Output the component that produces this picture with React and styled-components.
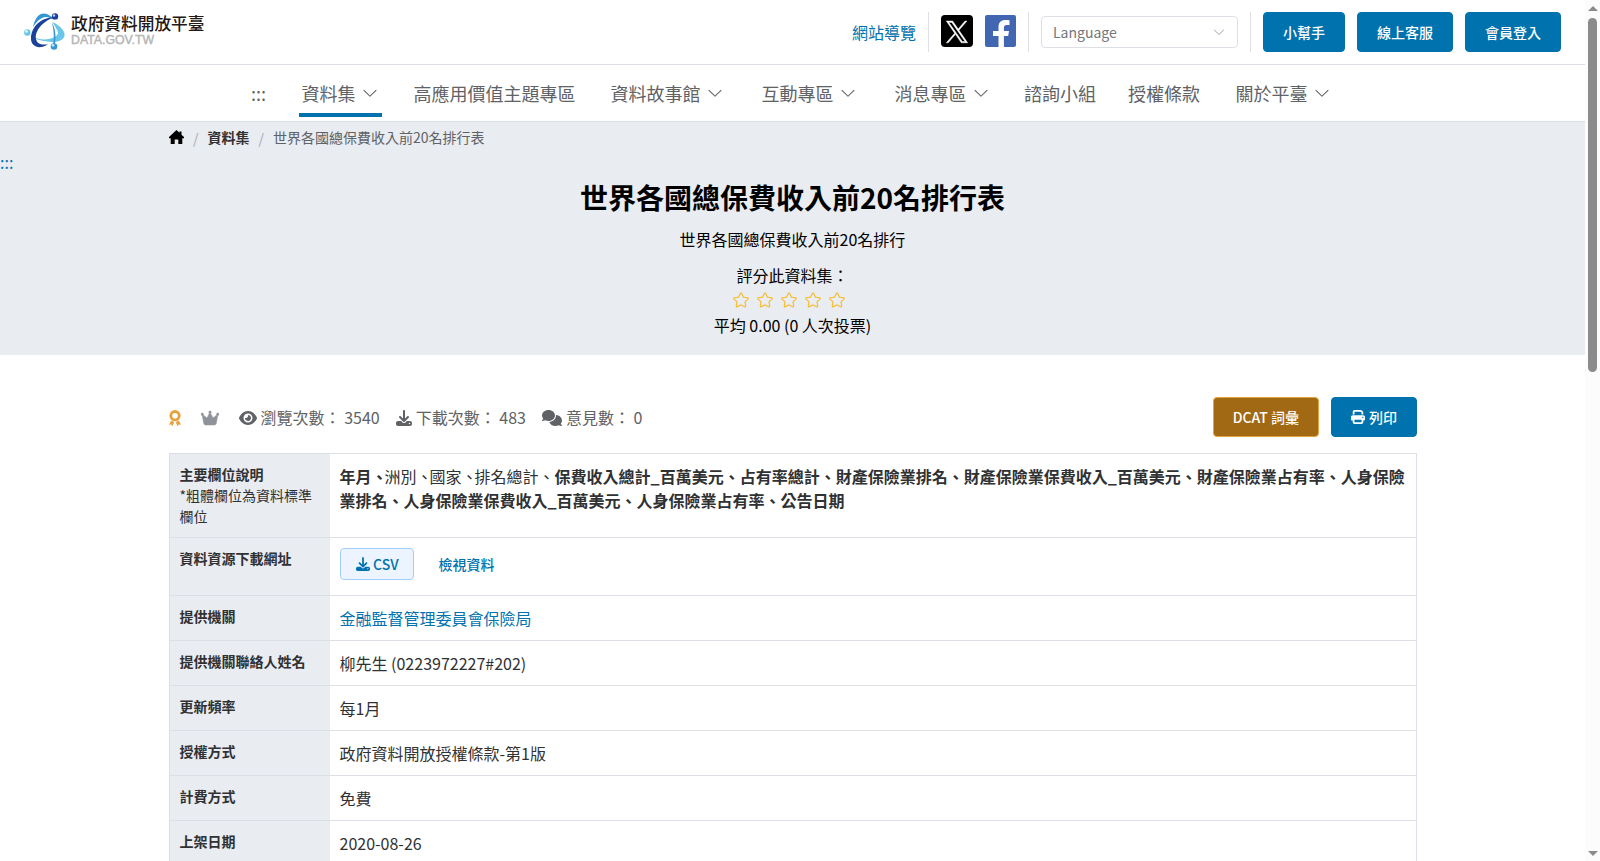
import React from 'react';
import styled, { createGlobalStyle } from 'styled-components';
import { FaEye, FaDownload, FaComments, FaPrint, FaCrown } from 'react-icons/fa6';

const navItems = [
  { label: '資料集', arrow: true, active: true, width: 83, left: 2.5, gap: 30 },
  { label: '高應用價值主題專區', width: 164, left: 1.5, gap: 32 },
  { label: '資料故事館', arrow: true, width: 119, left: 2.5, gap: 32 },
  { label: '互動專區', arrow: true, width: 101, left: 2.5, gap: 32 },
  { label: '消息專區', arrow: true, width: 101, left: 2.5, gap: 31 },
  { label: '諮詢小組', width: 72, left: 0, gap: 32 },
  { label: '授權條款', width: 72, left: 0, gap: 33 },
  { label: '關於平臺', arrow: true, width: 101, left: 2.5, gap: 0 },
];

const rows = [
  { title: '提供機關', value: '金融監督管理委員會保險局', link: true },
  { title: '提供機關聯絡人姓名', value: '柳先生 (0223972227#202)' },
  { title: '更新頻率', value: '每1月' },
  { title: '授權方式', value: '政府資料開放授權條款-第1版' },
  { title: '計費方式', value: '免費' },
  { title: '上架日期', value: '2020-08-26' },
];

const ArrowDown = ({ size }) => (
  <svg width={size} height={size} viewBox="0 0 1024 1024" fill="currentColor">
    <path d="M831.872 340.864 512 652.672 192.128 340.864a30.592 30.592 0 0 0-42.752 0 29.12 29.12 0 0 0 0 41.6L489.664 714.24a32 32 0 0 0 44.672 0l340.288-331.712a29.12 29.12 0 0 0 0-41.728 30.592 30.592 0 0 0-42.752 0z" />
  </svg>
);

const Star = () => (
  <svg width="18" height="18" viewBox="0 0 1024 1024" fill="currentColor">
    <path d="m512 747.84 228.16 119.936a6.4 6.4 0 0 0 9.28-6.72l-43.52-254.08 184.512-179.904a6.4 6.4 0 0 0-3.52-10.88l-255.104-37.12L517.76 147.904a6.4 6.4 0 0 0-11.52 0L392.192 379.072l-255.104 37.12a6.4 6.4 0 0 0-3.52 10.88L318.08 606.976l-43.584 254.08a6.4 6.4 0 0 0 9.28 6.72L512 747.84zM313.6 924.48a70.4 70.4 0 0 1-102.144-74.24l37.888-220.928L88.96 472.96A70.4 70.4 0 0 1 128 352.896l221.76-32.256 99.2-200.96a70.4 70.4 0 0 1 126.208 0l99.2 200.96 221.824 32.256a70.4 70.4 0 0 1 39.04 120.064L774.72 629.376l37.888 220.928a70.4 70.4 0 0 1-102.144 74.24L512 820.096l-198.4 104.32z" />
  </svg>
);

const LogoMark = () => (
  <svg width="42" height="38" viewBox="0 0 42 38">
    <path d="M9 14C11 5 15 .6 20 .6c4 0 7 2.400 9.500 6-4-2.600-8-3.200-11-1.800-4 1.400-6 4.700-9.500 9.200z" fill="#3497d5" />
    <path d="M3 20c7 6 15 7.500 23 5.700 7-1.700 9.600-4.700 7-9l-4.600-8c9 5 13.300 10 12 14.500-2 5.300-9.400 6.600-17.400 5.400C15 27.500 8 25 3 20z" fill="#6ac6e8" />
    <path d="M28 9.500c3.600 6.500 4.300 14 2.800 22.500l-1.600-.5c1.200-7.500.6-14.500-1.200-22z" fill="#3497d5" />
    <path d="M30 4.500C17 4 7 14 7 25.500c0 8.500 9 11.500 17 5.500-6 1.600-11 0-12-5-1.500-8 7-18 18-21.500z" fill="#1b4298" />
    <circle cx="31" cy="3.400" r="3.200" fill="#1b4298" />
    <circle cx="3.300" cy="19.500" r="3.200" fill="#6ac6e8" />
    <circle cx="30" cy="33.500" r="3.300" fill="#3497d5" />
    <circle cx="30" cy="2.500" r="1.200" fill="#b9d5ee" />
    <circle cx="2.400" cy="18.400" r="1.400" fill="#e4f6fb" />
    <circle cx="29" cy="32.300" r="1.400" fill="#c4e3f5" />
  </svg>
);

const XLogo = () => (
  <svg width="32" height="32" viewBox="0 0 32 32">
    <rect width="32" height="32" rx="4" fill="#000" />
    <g transform="translate(5.3 6) scale(.0178)">
      <path fill="#fff" stroke="#fff" strokeWidth="26" d="M714.163 519.284 1160.89 0h-105.86L667.137 450.887 357.328 0H0l468.492 681.821L0 1226.37h105.866l409.625-476.152 327.181 476.152H1200L714.137 519.284zM569.165 687.828l-47.468-67.894L144.011 79.694h162.604l304.797 435.991 47.468 67.894 396.2 566.721H892.476L569.165 687.854z" />
    </g>
  </svg>
);

const FacebookLogo = () => (
  <svg width="31" height="32" viewBox="0 0 31 32">
    <rect width="31" height="32" rx="2" fill="#4267b2" />
    <path d="M13.500 32V21H8v-5h5.500v-4c0-4.500 2.500-7 7-7 1.500 0 2.800.1 4 .3V10h-2.600c-2.300 0-3 1.300-3 3v3H24l-.8 5h-4.300v11z" fill="#fff" />
  </svg>
);

const HomeIcon = () => (
  <svg width="15" height="16" viewBox="0 0 15 16">
    <path d="M7.500 1 0 8v1.200h1.700V15h4V10.500h3.600V15h4V9.200H15V8l-2.500-2.300V2.500h-2v1.300z" fill="#000" />
  </svg>
);

const MedalIcon = () => (
  <svg width="12" height="16" viewBox="0 0 12 16" fill="currentColor">
    <circle cx="6" cy="5.700" r="4.200" fill="none" stroke="currentColor" strokeWidth="2.800" />
    <path d="M2 10.800 0 14.800l2.200-.2L3.500 16.200l1.800-4.200zM10 10.800l2 4-2.200-.2-1.300 1.600L6.700 12z" />
  </svg>
);

const App = () => {
  return (
    <Window>
      <GlobalStyle />
      <Page>
        <TopBar>
          <Brand>
            <LogoMark />
            <BrandText>
              <BrandName>政府資料開放平臺</BrandName>
              <BrandDomain>DATA.GOV.TW</BrandDomain>
            </BrandText>
          </Brand>
          <TopTools>
            <SiteMap>網站導覽</SiteMap>
            <Divider />
            <XLogo />
            <FacebookLogo />
            <Divider />
            <Select>
              Language
              <ArrowDown size={14} />
            </Select>
            <Divider />
            <Button>小幫手</Button>
            <Button>線上客服</Button>
            <Button>會員登入</Button>
          </TopTools>
        </TopBar>
        <Nav>
          <Anchor>:::</Anchor>
          {navItems.map((item) => (
            <NavItem key={item.label} $active={item.active} $width={item.width} $left={item.left} $gap={item.gap}>
              {item.label}
              {item.arrow && <ArrowDown size={18} />}
            </NavItem>
          ))}
        </Nav>
        <Hero>
          <Breadcrumb>
            <HomeIcon />
            <Slash>/</Slash>
            <strong>資料集</strong>
            <Slash>/</Slash>
            <span>世界各國總保費收入前20名排行表</span>
          </Breadcrumb>
          <MainAnchor>:::</MainAnchor>
          <Title>世界各國總保費收入前20名排行表</Title>
          <Summary>世界各國總保費收入前20名排行</Summary>
          <RateText>評分此資料集：</RateText>
          <Stars>
            {[1, 2, 3, 4, 5].map((n) => (
              <Star key={n} />
            ))}
          </Stars>
          <RateText>平均 0.00 (0 人次投票)</RateText>
        </Hero>
        <Content>
          <InfoBar>
            <Medal><MedalIcon /></Medal>
            <Crown><FaCrown size={18} /></Crown>
            <Stat><FaEye size={18} />瀏覽次數： 3540</Stat>
            <Stat><FaDownload size={16} />下載次數： 483</Stat>
            <Stat><FaComments size={20} />意見數： 0</Stat>
            <Actions>
              <Button $brown>DCAT 詞彙</Button>
              <Button><FaPrint size={14} />列印</Button>
            </Actions>
          </InfoBar>
          <Table>
            <Row>
              <Label>
                主要欄位說明
                <Note>*粗體欄位為資料標準欄位</Note>
              </Label>
              <Value>
                <b>年月<Comma>、</Comma></b>洲別<Comma>、</Comma>國家<Comma>、</Comma>排名總計、
                <b>保費收入總計_百萬美元、占有率總計、財產保險業排名、財產保險業保費收入_百萬美元、財產保險業占有率、人身保險業排名、人身保險業保費收入_百萬美元、人身保險業占有率、公告日期</b>
              </Value>
            </Row>
            <Row>
              <Label>資料資源下載網址</Label>
              <Resources>
                <CsvButton><FaDownload size={14} />CSV</CsvButton>
                <ViewLink>檢視資料</ViewLink>
              </Resources>
            </Row>
            {rows.map((row) => (
              <Row key={row.title}>
                <Label>{row.title}</Label>
                <Value $link={row.link}>{row.value}</Value>
              </Row>
            ))}
          </Table>
        </Content>
      </Page>
      <Scrollbar>
        <ScrollArrow />
        <Thumb />
        <ScrollArrow $down />
      </Scrollbar>
    </Window>
  );
};

// styles
const GlobalStyle = createGlobalStyle`
  * {
    box-sizing: border-box;
  }

  body {
    margin: 0;
    overflow: hidden;
    background: #fff;
    color: #303133;
    font-family: 'Noto Sans CJK TC', sans-serif;
    font-size: 16px;
    line-height: 24px;
  }

  svg {
    display: block;
    flex-shrink: 0;
  }
`;

const Window = styled.div`
  display: flex;
  height: 861px;
  overflow: hidden;
`;

const Page = styled.div`
  width: 1585px;
  flex-shrink: 0;
`;

const TopBar = styled.header`
  display: flex;
  justify-content: space-between;
  height: 65px;
  padding: 12px 24px;
  border-bottom: 1px solid #dcdfe6;
`;

const Brand = styled.div`
  display: flex;
  gap: 5px;
  padding-top: 1px;
`;

const BrandText = styled.div`
  color: #231815;
`;

const BrandName = styled.div`
  font-size: 16.7px;
  font-weight: 500;
  line-height: 20px;
`;

const BrandDomain = styled.div`
  font-family: 'Liberation Sans', Arial, sans-serif;
  font-size: 12.3px;
  line-height: 15px;
  color: #b5b5b6;
  -webkit-text-stroke: 0.4px #b5b5b6;
`;

const TopTools = styled.div`
  display: flex;
  align-items: center;
  gap: 12px;
  height: 40px;

  > svg {
    margin-top: -2px;
  }
`;

const SiteMap = styled.a`
  color: #0072ad;
`;

const Divider = styled.span`
  width: 1px;
  height: 40px;
  background: #dcdfe6;
`;

const Select = styled.div`
  display: flex;
  align-items: center;
  justify-content: space-between;
  width: 197px;
  height: 32px;
  padding: 0 11px;
  border: 1px solid #dcdfe6;
  border-radius: 4px;
  font-size: 14px;
  color: #73767a;

  svg {
    color: #a8abb2;
  }
`;

const Button = styled.button`
  display: flex;
  align-items: center;
  gap: 4px;
  height: 40px;
  padding: 0 19px;
  border: 1px solid ${({ $brown }) => ($brown ? '#e6a23c' : '#0072ad')};
  border-radius: 4px;
  background: ${({ $brown }) => ($brown ? '#a26915' : '#0072ad')};
  color: #fff;
  font-family: inherit;
  font-size: 14px;
  font-weight: 500;
  line-height: 14px;
`;

const Nav = styled.nav`
  display: flex;
  height: 57px;
  padding-left: 251px;
  border-bottom: 1px solid #dcdfe6;
  font-size: 18px;
  color: #606266;
`;

const Anchor = styled.span`
  width: 48px;
  line-height: 56px;
`;

const NavItem = styled.a`
  display: flex;
  align-items: center;
  gap: 5px;
  width: ${({ $width }) => $width}px;
  height: 52px;
  margin-right: ${({ $gap }) => $gap}px;
  padding: 8px 0 0 ${({ $left }) => $left}px;
  border-bottom: 4px solid ${({ $active }) => ($active ? '#0072ad' : 'transparent')};
  white-space: nowrap;
`;

const Hero = styled.section`
  height: 233px;
  background: #e9ecf1;
  color: #000;
  text-align: center;
`;

const Breadcrumb = styled.div`
  display: flex;
  align-items: center;
  height: 29px;
  padding-left: 169px;
  font-size: 14px;
  color: #606266;

  strong {
    color: #303133;
  }
`;

const Slash = styled.span`
  margin: 3px 9px 0;
  color: #a8abb2;
`;

const MainAnchor = styled.div`
  height: 23px;
  line-height: 23px;
  text-align: left;
  color: #0072ad;
`;

const Title = styled.h1`
  margin: 0;
  font-size: 28px;
  font-weight: 700;
  line-height: 46px;
`;

const Summary = styled.p`
  margin: 7px 0 12px;
`;

const RateText = styled.div`
  line-height: 24px;
`;

const Stars = styled.div`
  display: flex;
  justify-content: center;
  gap: 6px;
  height: 26px;
  padding: 4px 8px 0 0;
  color: #f7ba2a;
`;

const Content = styled.main`
  width: 1248px;
  margin-left: 169px;
`;

const InfoBar = styled.div`
  display: flex;
  align-items: center;
  height: 40px;
  margin: 42px 0 16px;
  color: #606266;
`;

const Medal = styled.span`
  width: 32px;
  padding-top: 1px;
  color: #e6a23c;
`;

const Crown = styled.span`
  width: 38px;
  padding-top: 2px;
  color: #909399;

  svg {
    stroke: currentColor;
    stroke-width: 16px;
  }
`;

const Stat = styled.span`
  display: flex;
  align-items: center;
  gap: 3.6px;
  margin-right: 16.4px;

  svg {
    margin-top: 2px;
  }
`;

const Actions = styled.div`
  display: flex;
  gap: 12px;
  margin-left: auto;
`;

const Table = styled.div`
  border: 1px solid #dcdfe6;
  border-bottom: 0;
`;

const Row = styled.div`
  display: flex;
  border-bottom: 1px solid #dcdfe6;
`;

const Label = styled.div`
  width: 160px;
  flex-shrink: 0;
  padding: 9.5px 10px 10.5px 9.5px;
  background: #e9ecf1;
  font-size: 14px;
  font-weight: 700;
  line-height: 21px;
`;

const Note = styled.div`
  font-weight: 400;
`;

const Value = styled.div`
  flex: 1;
  padding: 9.5px 10px 10.5px 9.5px;
  color: ${({ $link }) => ($link ? '#0072ad' : '#303133')};
`;

const Comma = styled.span`
  letter-spacing: -3px;
`;

const Resources = styled.div`
  display: flex;
  align-items: center;
  gap: 24px;
  height: 57px;
  padding: 0 10px 5px;
  font-size: 14px;
  font-weight: 500;
  color: #0072ad;
`;

const CsvButton = styled.a`
  display: flex;
  align-items: center;
  gap: 3px;
  height: 32px;
  padding: 0 15px;
  border: 1px solid #a0cfff;
  border-radius: 4px;
  background: #ecf5ff;
`;

const ViewLink = styled.a`
  line-height: 32px;
`;

const Scrollbar = styled.div`
  display: flex;
  flex-direction: column;
  align-items: center;
  width: 15px;
  padding: 6px 0 5px;
  background: #fcfcfc;
`;

const ScrollArrow = styled.span`
  margin-top: ${({ $down }) => ($down ? 'auto' : '0')};
  border: 5px solid transparent;
  border-top: ${({ $down }) => ($down ? '5px solid #8b8b8b' : '0')};
  border-bottom: ${({ $down }) => ($down ? '0' : '5px solid #8b8b8b')};
`;

const Thumb = styled.span`
  width: 9px;
  height: 354px;
  margin-top: 7px;
  border-radius: 5px;
  background: #8b8b8b;
`;

export default App;
